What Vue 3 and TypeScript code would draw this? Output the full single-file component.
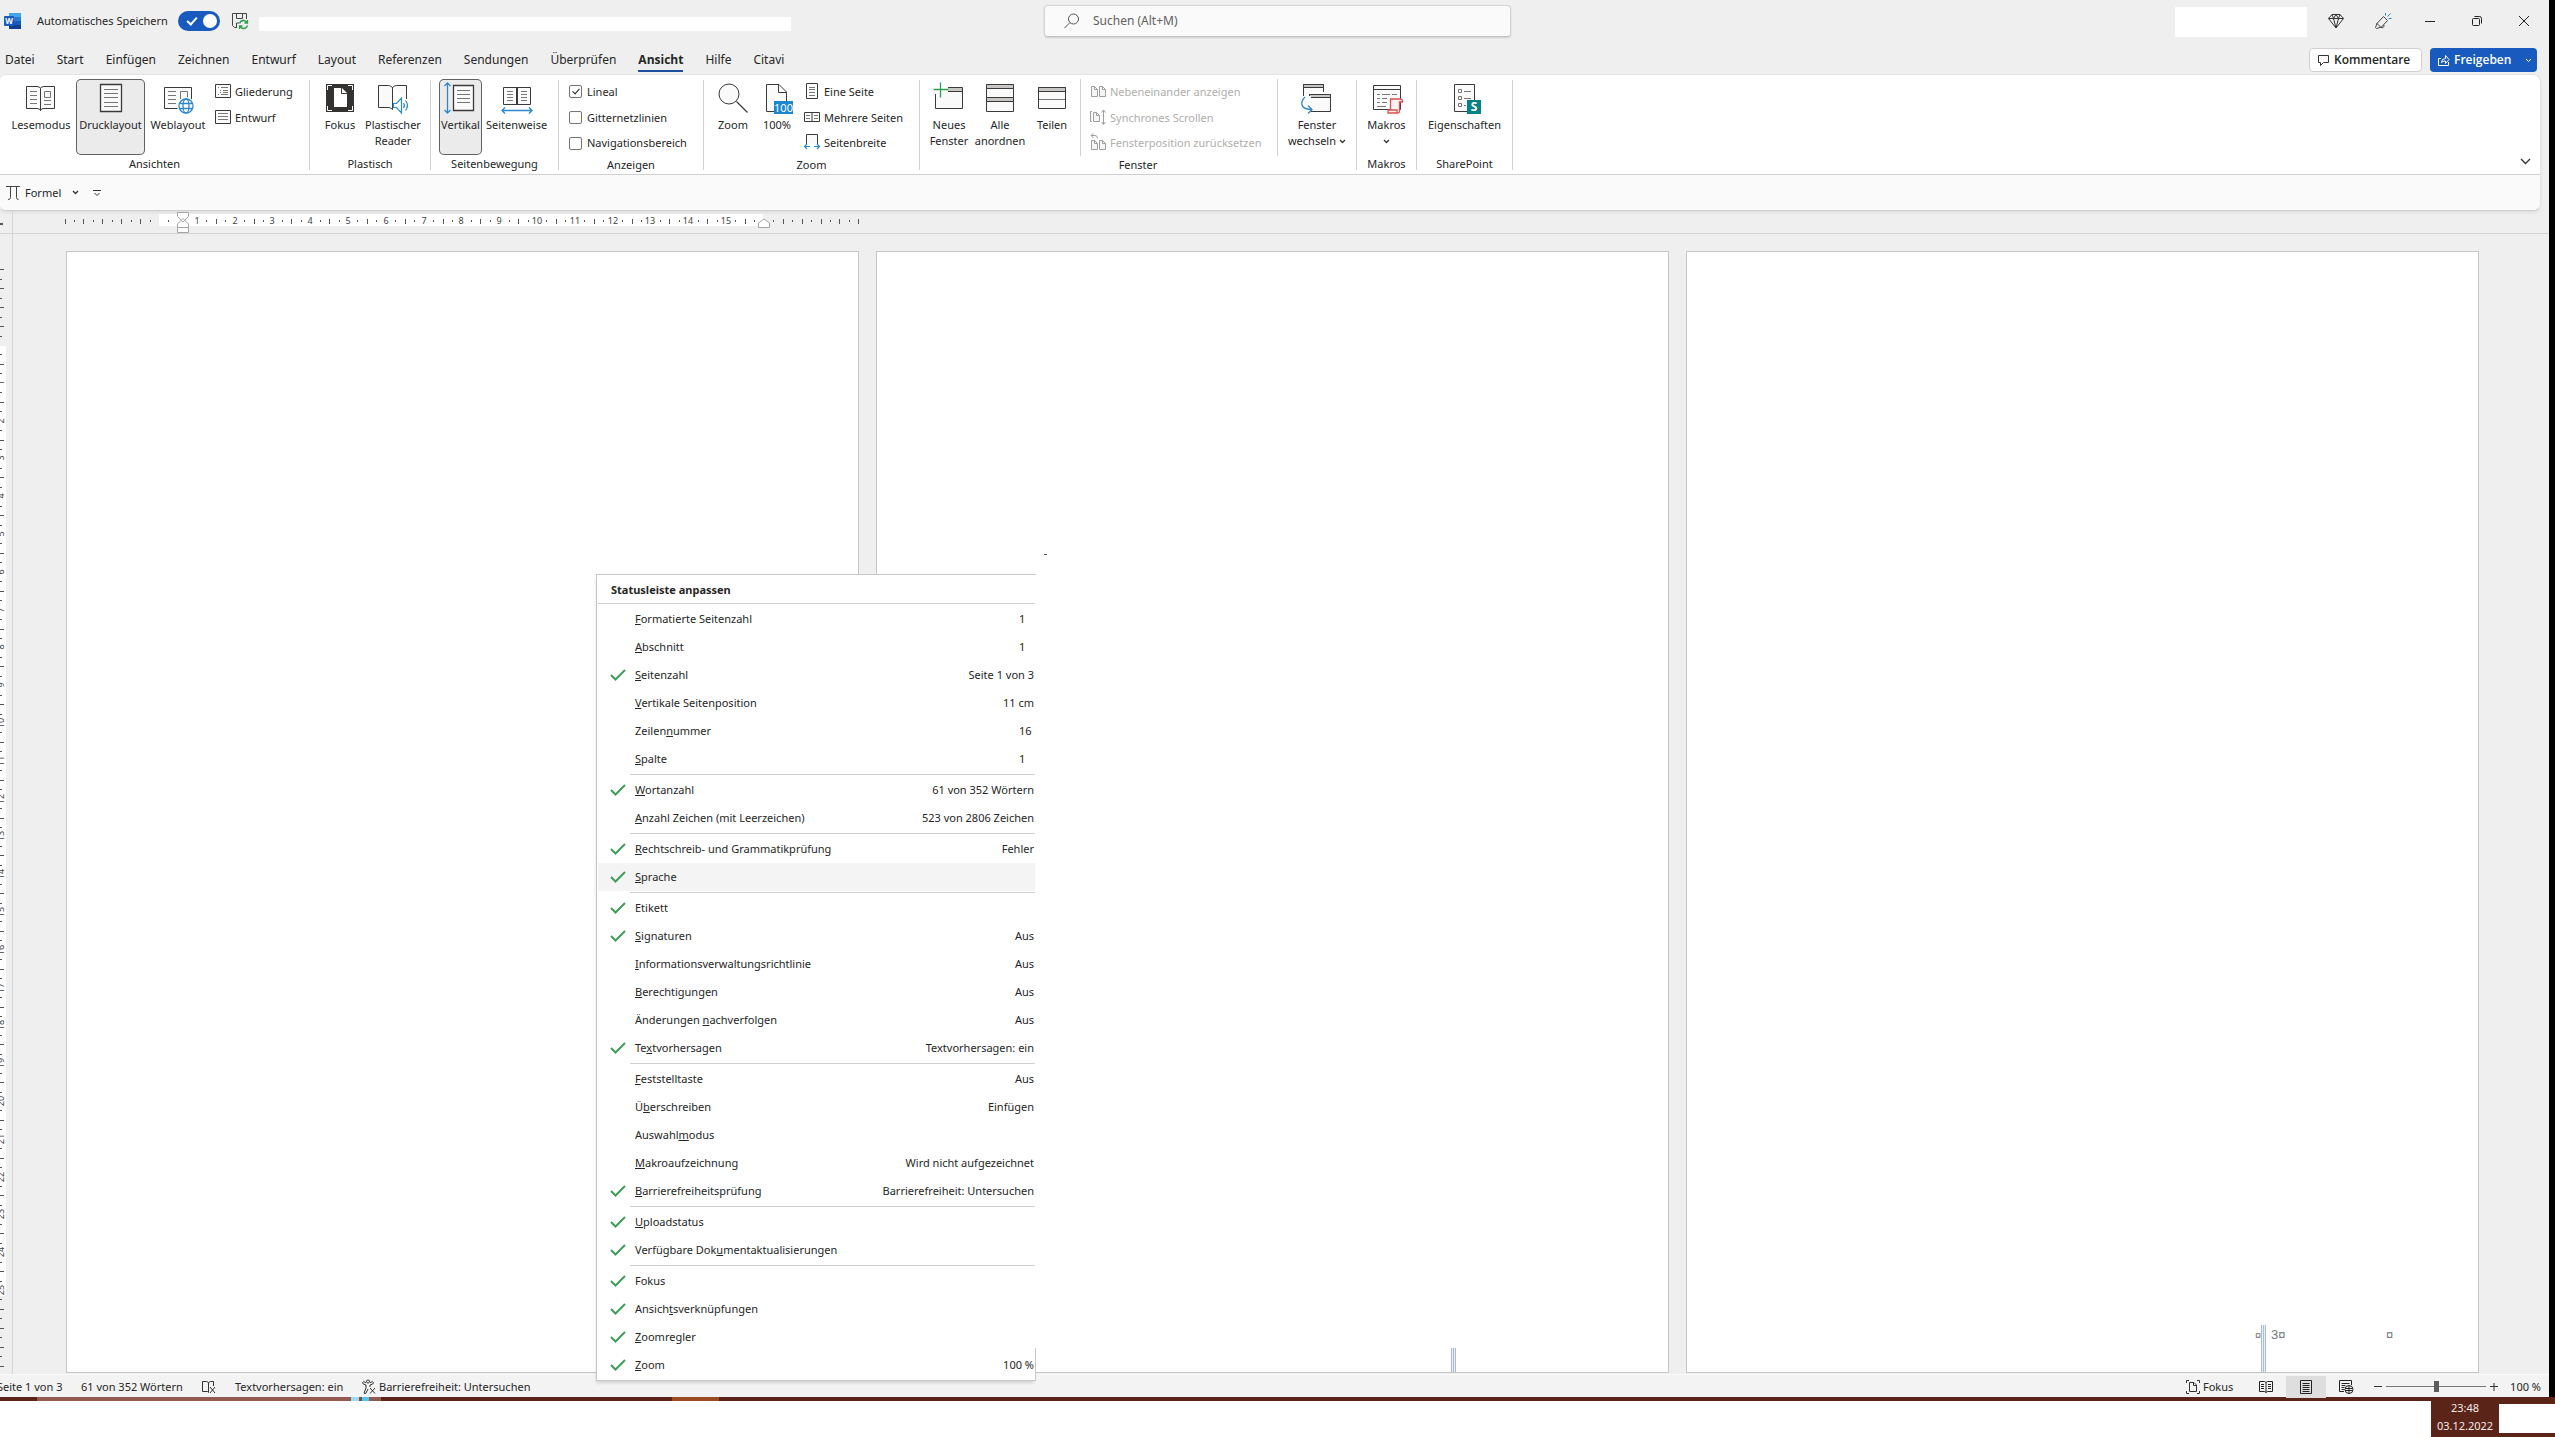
<script setup lang="ts">
import { ref } from 'vue'

interface BigButton { label: string[]; icon: string; width: number; active?: boolean; chevron?: boolean }
interface MenuItem { before: string; key: string; after: string; checked?: boolean; value?: string; field?: boolean; hover?: boolean }
interface Tick { pos: number; kind: 'dot' | 'tick' | 'num'; label: string }

const autoSave = ref(true)
const search = ref('')
const zoom = ref(50)

const tabs = ['Datei', 'Start', 'Einfügen', 'Zeichnen', 'Entwurf', 'Layout', 'Referenzen', 'Sendungen', 'Überprüfen', 'Ansicht', 'Hilfe', 'Citavi']

const D = 'stroke="#3b3a39"'
const G = 'stroke="#797775"'
const B = 'stroke="#2b88d0"'

const icons: Record<string, string> = {
  read: `<path ${D} fill="#fafafa" d="M1.5 4.5H12q3 0 3.500 2 .5-2 3.500-2h10.500v22H19q-3 0-3.500 2-.5-2-3.500-2H1.500zM15.500 6.500v22"/><path ${G} d="M5 9.500h7M5 13.500h7M5 17.500h7M5 21.500h7M19 18.500h7M19 22.500h7M19.500 9.500h6v6h-6z"/>`,
  print: `<path ${D} stroke-width="1.3" fill="#fafafa" d="M5.500 2.500h21v27h-21z"/><path ${G} d="M9 7.500h14M9 11.500h14M9 15.500h14M9 20.500h14M9 24.500h14"/>`,
  web: `<path ${D} fill="#fafafa" d="M2.500 5.500h27v21h-27z"/><path ${G} d="M6 9.500h8M6 13.500h8M6 17.500h8M6 21.500h8M18.500 18v-8.500h7V16"/><circle cx="24" cy="24" r="9" fill="#fff"/><circle ${B} stroke-width="1.3" fill="#fff" cx="24" cy="24" r="7"/><ellipse ${B} stroke-width="1.3" cx="24" cy="24" rx="3" ry="7"/><path ${B} stroke-width="1.3" d="M17.500 21.500h13M17.500 26.500h13"/>`,
  outline: `<path ${D} fill="#fafafa" d="M.5.5h15v13H.5z"/><path ${G} d="M3 3.500h1M6 3.500h7M5 6.500h1M8 6.500h5M5 8.500h1M8 8.500h5M3 10.500h1M6 10.500h7"/>`,
  draft: `<path ${D} fill="#fafafa" d="M.5.5h15v13H.5z"/><path ${G} d="M3 3.500h10M3 6.500h10M3 9.500h10"/>`,
  focus: `<path fill="#333231" d="M2 2h28v28H2z"/><path stroke="#fff" d="M3.500 8V3.500H8M24 3.500h4.500V8M28.500 24v4.500H24M8 28.500H3.500V24"/><path fill="#fff" d="M10 6h8l5 5v14H10z"/><path ${D} d="M17.500 6v5.500H23"/>`,
  reader: `<path ${D} fill="#fafafa" d="M15.500 5.500q-2-2-4-2h-10v22H11q3 0 4.500 2zV20M15.500 5.500q2-2 4-2h10V17"/><path ${B} stroke-width="1.2" fill="#fff" d="M16.500 21.500h3l5-5.500v15l-5-5.500h-3zM26.500 21q2 2.500 0 5M28.500 18.500q4 5 0 10"/>`,
  vertical: `<path ${B} stroke-width="1.3" d="M2.500 1v30M-.5 4l3-3 3 3M-.5 28l3 3 3-3"/><path ${D} stroke-width="1.3" fill="#fafafa" d="M8.500 3.500h20v25h-20z"/><path ${G} d="M12 8.500h13M12 12.500h13M12 16.500h13M12 20.500h13"/>`,
  side: `<path ${D} fill="#fafafa" d="M2.500 5.500h27v17h-27zM15.500 5.500v17M16.500 5.500v17"/><path ${G} d="M6 9.500h6M6 12.500h6M6 15.500h6M6 18.500h6M20 9.500h6M20 12.500h6M20 15.500h6M20 18.500h6"/><path ${B} stroke-width="1.3" d="M1 28.500h30M4 25.500l-3 3 3 3M28 25.500l3 3-3 3"/>`,
  zoom: `<circle ${D} fill="#fafafa" cx="12" cy="12" r="10"/><path ${D} stroke-width="1.2" d="M19.500 19.500l11 11"/>`,
  hundred: `<path ${D} fill="#fafafa" d="M13 29.500H5.500v-27H18l7.500 7.500v9M17.500 2.500v8h8"/><path fill="#1e88cf" d="M13 19h19v13H13z"/><text x="22.500" y="30" font-size="11" fill="#fff" text-anchor="middle">100</text>`,
  one: `<path ${D} fill="#fafafa" d="M2.500-.5h11v15h-11z"/><path ${G} d="M5 3.500h6M5 5.500h6M5 8.500h6M5 11.500h6"/>`,
  many: `<path ${D} fill="#fafafa" d="M.5 2.500h15v9H.5zM8 2.500v9"/><path ${G} d="M2 5.500h4M2 8.500h4M10 5.500h4M10 8.500h4"/>`,
  width: `<path ${D} fill="#fafafa" d="M2.500 9v-9.500h11V9"/><path ${B} stroke-width="1.200" d="M1 11.500h5M10 11.500h5M3 9l-2.500 2.500L3 14M13 9l2.500 2.500L13 14"/>`,
  newwin: `<path ${D} fill="#fafafa" d="M2.500 12v14.500h27v-21H15"/><path fill="#c8c6c4" d="M15 6h14v3.500H15z"/><path ${D} d="M15 9.500h14"/><path stroke="#2f9e4f" stroke-width="1.300" d="M.5 7.500h15M7.500.5v15"/>`,
  arrange: `<path ${D} fill="#fafafa" d="M2.500 2.500h27v27h-27z"/><path fill="#c8c6c4" ${D} d="M2.500 2.500h27v4h-27zM2.500 15.500h27v4h-27z"/>`,
  split: `<path ${D} fill="#fafafa" d="M2.500 5.500h27v21h-27z"/><path fill="#c8c6c4" ${D} d="M2.500 5.500h27v4h-27z"/><path ${G} d="M3 17.500h26"/>`,
  beside: `<path stroke="#a19f9d" fill="#f5f5f5" d="M1.500 2.500h3l3 3v7h-6zM9.500 2.500h3l3 3v7h-6zM4.500 2.500v3h3M12.500 2.500v3h3"/>`,
  sync: `<path stroke="#a19f9d" fill="#f5f5f5" d="M2 1.500H.5v10H2M3.500 2.500h3l3 3v6h-6zM6.500 2.500v3h3"/><path stroke="#a19f9d" d="M13.500 0v14M11.500 2.500l2-2.500 2 2.500M11.500 12l2 2.500 2-2.500"/>`,
  reset: `<path stroke="#a19f9d" fill="#f5f5f5" d="M1.500 5.500h3l3 3v6h-6zM9.500 5.500h3l3 3v6h-6zM4.500 5.500v3h3M12.500 5.500v3h3"/><path stroke="#a19f9d" d="M3.500-1.500L1 .5l2.500 2.500M1 .5h4q2.500 0 2.500 3"/>`,
  switch: `<path ${D} fill="#fafafa" d="M2.500 2.500h20v14h-20z"/><path ${D} fill="#c8c6c4" d="M2.500 2.500h20v3h-20z"/><path fill="#fff" d="M6 10h27v23H6z"/><path ${D} fill="#fafafa" d="M8.500 12.500h21v17h-21z"/><path ${D} fill="#c8c6c4" d="M8.500 12.500h21v3h-21z"/><path fill="#fff" d="M0 14h10v20H0z"/><path ${B} stroke-width="1.300" d="M4 15q-4 4-3 8t9 4.500M7 23.500l4 4-4 4"/>`,
  macro: `<path ${D} fill="#fafafa" d="M2.500 3.500h27v24h-27zM2.500 7.500h27"/><path ${G} d="M6 12.500h3M11 12.500h8M21 12.500h5M6 16.500h3M11 16.500h5M6 20.500h3M11 20.500h5M6 24.500h9"/><path stroke="#e04f4f" stroke-width="1.300" fill="#fdf3f3" d="M19.500 28V17h10q2 0 2 3h-3v9.500q0 1.500-1.500 1.500H17v-3h9v3"/>`,
  props: `<path ${D} fill="#fafafa" d="M5.500 2.500h20v27h-20z"/><path ${G} d="M9.500 7.500h3v3h-3zM9.500 14.500h3v3h-3zM9.500 21.500h3v3h-3zM15 9.500h7M15 16.500h7M15 23.500h2"/><path fill="#038387" d="M18 18h14v14H18z"/><text x="25" y="29" font-size="12" font-weight="700" fill="#fff" text-anchor="middle">S</text>`
}

const views: BigButton[] = [
  { label: ['Lesemodus'], icon: 'read', width: 66 },
  { label: ['Drucklayout'], icon: 'print', width: 69, active: true },
  { label: ['Weblayout'], icon: 'web', width: 62 }
]
const immersive: BigButton[] = [
  { label: ['Fokus'], icon: 'focus', width: 44 },
  { label: ['Plastischer', 'Reader'], icon: 'reader', width: 58 }
]
const movement: BigButton[] = [
  { label: ['Vertikal'], icon: 'vertical', width: 43, active: true },
  { label: ['Seitenweise'], icon: 'side', width: 65 }
]
const zooms: BigButton[] = [
  { label: ['Zoom'], icon: 'zoom', width: 42 },
  { label: ['100%'], icon: 'hundred', width: 42 }
]
const windows: BigButton[] = [
  { label: ['Neues', 'Fenster'], icon: 'newwin', width: 42 },
  { label: ['Alle', 'anordnen'], icon: 'arrange', width: 56 },
  { label: ['Teilen'], icon: 'split', width: 44 }
]

interface Group { name: string; cls: string; big: BigButton[]; small?: [string, string][]; disabled?: [string, string][]; last?: BigButton; checks?: boolean }
const groups: Group[] = [
  { name: 'Ansichten', cls: 'g-views', big: views, small: [['outline', 'Gliederung'], ['draft', 'Entwurf']] },
  { name: 'Plastisch', cls: 'g-immersive', big: immersive },
  { name: 'Seitenbewegung', cls: 'g-move', big: movement },
  { name: 'Anzeigen', cls: 'g-show', big: [], checks: true },
  { name: 'Zoom', cls: 'g-zoom', big: zooms, small: [['one', 'Eine Seite'], ['many', 'Mehrere Seiten'], ['width', 'Seitenbreite']] },
  {
    name: 'Fenster', cls: 'g-window', big: windows,
    disabled: [['beside', 'Nebeneinander anzeigen'], ['sync', 'Synchrones Scrollen'], ['reset', 'Fensterposition zurücksetzen']],
    last: { label: ['Fenster', 'wechseln'], icon: 'switch', width: 66, chevron: true }
  },
  { name: 'Makros', cls: 'g-macro', big: [{ label: ['Makros', ''], icon: 'macro', width: 50, chevron: true }] },
  { name: 'SharePoint', cls: 'g-share', big: [{ label: ['Eigenschaften'], icon: 'props', width: 84 }] }
]

const checks = ref([
  { label: 'Lineal', on: true },
  { label: 'Gitternetzlinien', on: false },
  { label: 'Navigationsbereich', on: false }
])

const m = (text: string, checked = false, value = '', extra: Partial<MenuItem> = {}): MenuItem => {
  const i = text.indexOf('_')
  return i < 0
    ? { before: text, key: '', after: '', checked, value, ...extra }
    : { before: text.slice(0, i), key: text[i + 1], after: text.slice(i + 2), checked, value, ...extra }
}
const menu: MenuItem[][] = [
  [
    m('_Formatierte Seitenzahl', false, '1', { field: true }),
    m('_Abschnitt', false, '1', { field: true }),
    m('_Seitenzahl', true, 'Seite 1 von 3'),
    m('_Vertikale Seitenposition', false, '11 cm'),
    m('Zeilen_nummer', false, '16', { field: true }),
    m('_Spalte', false, '1', { field: true })
  ],
  [m('_Wortanzahl', true, '61 von 352 Wörtern'), m('_Anzahl Zeichen (mit Leerzeichen)', false, '523 von 2806 Zeichen')],
  [m('_Rechtschreib- und Grammatikprüfung', true, 'Fehler'), m('_Sprache', true, '', { hover: true })],
  [
    m('Etikett', true),
    m('_Signaturen', true, 'Aus'),
    m('_Informationsverwaltungsrichtlinie', false, 'Aus'),
    m('_Berechtigungen', false, 'Aus'),
    m('Änderungen _nachverfolgen', false, 'Aus'),
    m('Te_xtvorhersagen', true, 'Textvorhersagen: ein')
  ],
  [
    m('_Feststelltaste', false, 'Aus'),
    m('Ü_berschreiben', false, 'Einfügen'),
    m('Auswahl_modus'),
    m('_Makroaufzeichnung', false, 'Wird nicht aufgezeichnet'),
    m('_Barrierefreiheitsprüfung', true, 'Barrierefreiheit: Untersuchen')
  ],
  [m('_Uploadstatus', true), m('Verfügbare Dok_umentaktualisierungen', true)],
  [m('Fokus', true), m('Ansich_tsverknüpfungen', true), m('_Zoomregler', true), m('_Zoom', true, '100 %')]
]

// Four steps per centimetre; numbers appear only inside the text area.
const STEP = 37.8 / 4
function scale(from: number, to: number, limit: number, origin: number): Tick[] {
  const out: Tick[] = []
  for (let k = from; k <= to; k++) {
    if (k === 0) continue
    const inside = k > 0 && k < limit
    const kind = k % 2 !== 0 ? 'dot' : inside && k % 4 === 0 ? 'num' : 'tick'
    out.push({ pos: Math.round(origin + k * STEP), kind, label: String(k / 4) })
  }
  return out
}
const hTicks = scale(-10, 74, 64, 159).filter(t => Math.abs(t.pos - 183) > 6 && Math.abs(t.pos - 764) > 4)
const vTicks = scale(-8, 108, 101, 111)
</script>

<template>
  <div class="desktop">
    <div class="window">
      <header class="title-bar">
        <svg class="word" width="18" height="18" viewBox="0 0 18 18">
          <path fill="#41a5ee" d="M5 1h12v4H5z" /><path fill="#2b7cd3" d="M5 5h12v4H5z" /><path fill="#185abd" d="M5 9h12v4H5z" /><path fill="#103f91" d="M5 13h12v4H5z" />
          <rect y="4" width="10" height="10" rx="1" fill="#185abd" />
          <text x="5" y="12" font-size="8" font-weight="700" fill="#fff" text-anchor="middle">W</text>
        </svg>
        <label class="autosave">
          <span>Automatisches Speichern</span>
          <input v-model="autoSave" type="checkbox" role="switch" class="switch" />
        </label>
        <button class="plain save" aria-label="Speichern">
          <svg width="18" height="18" viewBox="0 0 18 18" fill="none" stroke="#444">
            <path d="M6 15.500H3.500l-2-2v-12h14V7M5.500 1.500v5h6v-5M5.500 15v-4H8" />
            <path stroke="#2f9e4f" stroke-width="1.300" d="M8.500 11.500q1-3 4-3 2.500 0 3.500 2.500M16.500 8v3h-3M16.500 13.500q-1 3-4 3-2.500 0-3.500-2.500M8.500 17v-3h3" />
          </svg>
        </button>
        <div class="doc-name"></div>
        <div class="search">
          <svg width="16" height="16" viewBox="0 0 16 16" fill="none" stroke="#555"><circle cx="9.500" cy="6" r="5" /><path d="M6 9.500L.5 15" /></svg>
          <input v-model="search" type="text" placeholder="Suchen (Alt+M)" aria-label="Suchen" />
        </div>
        <div class="account"></div>
        <div class="win-buttons">
          <button class="plain" aria-label="Premium">
            <svg width="16" height="16" viewBox="0 0 16 16" fill="none" stroke="#333"><path d="M4 1.500h8l3.500 4L8 15 .5 5.500zM.5 5.500h15M4 1.500l1.500 4L8 15l2.500-9.500 1.500-4M5.500 5.500L8 1.500l2.500 4" /></svg>
          </button>
          <button class="plain" aria-label="Neuigkeiten">
            <svg width="18" height="18" viewBox="0 0 18 18" fill="none" stroke="#444"><path d="M9.500 4.500l4 4-6 6.500-5 1.500-1-1 1.500-4zM2.500 11l4.500 4.500M7 15.500q3 1 3-2.500" /><path stroke="#2b88d0" d="M11.500 3.500v-2.500M13.500 4.500l3-3M14.500 6.500h3" /></svg>
          </button>
          <button class="plain" aria-label="Minimieren"><svg width="12" height="12" viewBox="0 0 12 12" stroke="#222"><path d="M1 6.500h10" /></svg></button>
          <button class="plain" aria-label="Wiederherstellen"><svg width="12" height="12" viewBox="0 0 12 12" fill="none" stroke="#222"><rect x="1.500" y="3.500" width="7" height="7" rx="1" /><path d="M3.500 1.500h5q2 0 2 2v5" /></svg></button>
          <button class="plain" aria-label="Schließen"><svg width="12" height="12" viewBox="0 0 12 12" stroke="#222"><path d="M1 1l10 10M11 1L1 11" /></svg></button>
        </div>
      </header>

      <nav class="tabs">
        <button v-for="t in tabs" :key="t" class="plain tab" :class="{ current: t === 'Ansicht' }">{{ t }}</button>
        <div class="spacer"></div>
        <button class="comments">
          <svg width="13" height="13" viewBox="0 0 13 13" fill="none" stroke="#333"><path d="M1.500 1.500h10v7h-5l-3 3v-3h-2z" /></svg>
          Kommentare
        </button>
        <button class="share">
          <svg width="13" height="13" viewBox="0 0 13 13" fill="none" stroke="#fff"><path d="M4 4.500H1.500v7h10V8M4.500 8.500q0-4 4-4v-3l3.500 4-3.500 4v-2.500q-2.500 0-4 1.500z" /></svg>
          Freigeben
          <svg class="share-chevron" width="7" height="5" viewBox="0 0 7 5" fill="none" stroke="#fff"><path d="M1 1l2.500 2.500L6 1" /></svg>
        </button>
      </nav>

      <section class="ribbon">
        <div class="groups">
          <div v-for="g in groups" :key="g.name" class="group" :class="g.cls">
            <div class="controls">
              <button v-for="b in g.big" :key="b.icon" class="plain big" :class="{ active: b.active }" :style="{ width: b.width + 'px' }">
                <svg width="32" height="32" viewBox="0 0 32 32" fill="none" v-html="icons[b.icon]"></svg>
                <span v-for="(l, i) in b.label" :key="i" class="line">{{ l }}<svg v-if="b.chevron && i === 1" width="7" height="5" viewBox="0 0 7 5" fill="none" stroke="#333" stroke-width="1.300"><path d="M1 1l2.500 2.500L6 1" /></svg></span>
              </button>
              <div v-if="g.small" class="column">
                <button v-for="s in g.small" :key="s[0]" class="plain small">
                  <svg width="16" height="16" viewBox="0 0 16 16" fill="none" v-html="icons[s[0]]"></svg>{{ s[1] }}
                </button>
              </div>
              <div v-if="g.checks" class="column">
                <label v-for="c in checks" :key="c.label" class="small check"><input v-model="c.on" type="checkbox" />{{ c.label }}</label>
              </div>
              <div v-if="g.disabled" class="column inactive">
                <button v-for="s in g.disabled" :key="s[0]" class="plain small" disabled>
                  <svg width="16" height="16" viewBox="0 0 16 16" fill="none" v-html="icons[s[0]]"></svg>{{ s[1] }}
                </button>
              </div>
              <button v-if="g.last" class="plain big" :style="{ width: g.last.width + 'px' }">
                <svg width="32" height="32" viewBox="0 0 32 32" fill="none" v-html="icons[g.last.icon]"></svg>
                <span class="line">{{ g.last.label[0] }}</span>
                <span class="line">{{ g.last.label[1] }} <svg width="7" height="5" viewBox="0 0 7 5" fill="none" stroke="#333" stroke-width="1.300"><path d="M1 1l2.500 2.500L6 1" /></svg></span>
              </button>
            </div>
            <div class="group-name">{{ g.name }}</div>
          </div>
          <div class="spacer"></div>
          <button class="plain collapse" aria-label="Menüband reduzieren"><svg width="11" height="7" viewBox="0 0 11 7" fill="none" stroke="#333" stroke-width="1.300"><path d="M1 1l4.500 4.500L10 1" /></svg></button>
        </div>
        <div class="quick">
          <button class="plain formula">
            <svg width="14" height="14" viewBox="0 0 14 14" fill="none" stroke="#444"><path d="M0 .5h14M4.500.5v11q0 2-2.500 2M10.500.5v11q0 2 2 2" /></svg>
            Formel
            <svg class="formula-chevron" width="7" height="5" viewBox="0 0 7 5" fill="none" stroke="#333" stroke-width="1.300"><path d="M1 1l2.500 2.500L6 1" /></svg>
          </button>
          <button class="plain" aria-label="Symbolleiste anpassen"><svg width="8" height="8" viewBox="0 0 8 8" fill="none" stroke="#333"><path d="M0 1.500h8M1.500 4L4 6.500 6.500 4" /></svg></button>
        </div>
      </section>

      <div class="h-ruler">
        <svg width="100%" height="22">
          <path stroke="#555" stroke-width="2" d="M0 13h3" />
          <path stroke="#d4d4d4" d="M12.500 0v22" />
          <rect x="159" y="3" width="604" height="12" fill="#fff" />
          <template v-for="t in hTicks" :key="t.pos">
            <text v-if="t.kind === 'num'" :x="t.pos" y="13" text-anchor="middle" class="ruler-num">{{ t.label }}</text>
            <rect v-else :x="t.pos" :y="t.kind === 'tick' ? 8 : 9" width="1" :height="t.kind === 'tick' ? 5 : 2" fill="#555" />
          </template>
          <path fill="#fff" stroke="#a5a5a5" d="M177.500 1.500h11v4L183 11l-5.500-5.500zM183 7.500l5.500 5.500v3.500h-11V13zM177.500 16.500h11v5h-11zM758.500 16.500V12l5.500-4 5.500 4v4.500z" />
        </svg>
      </div>

      <main class="document">
        <div class="v-ruler">
          <svg width="12" height="100%">
            <rect x="0" y="112" width="6" height="950" fill="#fff" />
            <template v-for="t in vTicks" :key="t.pos">
              <text v-if="t.kind === 'num'" x="0" y="0" :transform="`translate(4 ${t.pos}) rotate(-90)`" text-anchor="middle" class="ruler-num">{{ t.label }}</text>
              <rect v-else x="0" :y="t.pos" :width="t.kind === 'tick' ? 4 : 2" height="1" fill="#555" />
            </template>
          </svg>
        </div>
        <div class="pages">
          <article class="page"></article>
          <article class="page">
            <i class="speck"></i>
            <i class="cursor-bar early"></i>
          </article>
          <article class="page">
            <span class="mark first">¤</span>
            <i class="cursor-bar"></i>
            <span class="mark number">3¤</span>
            <span class="mark end">¤</span>
          </article>
        </div>
      </main>

      <footer class="status">
        <span class="page-count">Seite 1 von 3</span>
        <span class="words">61 von 352 Wörtern</span>
        <svg class="proof" width="16" height="14" viewBox="0 0 16 14" fill="none" stroke="#333"><path d="M7.500 12.500l-1-1h-5V1.500h4l2 1 2-1h3V6M7.500 2.500v10M9 7l5 6M14 7l-5 6" /></svg>
        <span class="predict">Textvorhersagen: ein</span>
        <svg class="access" width="16" height="16" viewBox="0 0 16 16" fill="none" stroke="#333"><circle cx="7" cy="2.500" r="1.500" /><path d="M5 3.500q-3-1.500-3.500 0T5 6v3l-2 5q1 1.500 2 0l2-4M9 3.500q3-1.500 3.500 0T9 6v2M9 9l5 5.500M14 9l-5 5.500" /></svg>
        <span>Barrierefreiheit: Untersuchen</span>
        <div class="spacer"></div>
        <button class="plain focus-btn">
          <svg width="14" height="14" viewBox="0 0 14 14" fill="none" stroke="#333"><path d="M3 .5H.5V3M11 .5h2.500V3M13.500 11v2.500H11M3 13.500H.5V11M3.500 2.500H8l2.500 2.500v6.500h-7zM7.500 2.500v3h3" /></svg>
          Fokus
        </button>
        <button class="plain view" aria-label="Lesemodus"><svg width="14" height="14" viewBox="0 0 14 14" fill="none" stroke="#222"><path d="M.5 1.500h5L7 2.500l1.500-1h5v10h-5L7 12.500l-1.500-1h-5zM7 2.500v10M2 4.500h3M2 6.500h3M2 8.500h3M9 4.500h3M9 6.500h3M9 8.500h3" /></svg></button>
        <button class="plain view on" aria-label="Drucklayout"><svg width="12" height="14" viewBox="0 0 12 14" fill="none" stroke="#222"><path d="M.5.5h11v13H.5zM2.500 3.500h7M2.500 5.500h7M2.500 7.500h7M2.500 9.500h7M2.500 11.500h7" /></svg></button>
        <button class="plain view" aria-label="Weblayout"><svg width="15" height="14" viewBox="0 0 15 14" fill="none" stroke="#222"><path d="M5 11.500H.5V.5h12V5M2.500 3.500h8M2.500 5.500h4M2.500 7.500h3M2.500 9.500h3" /><circle cx="10" cy="9.500" r="4" /><path d="M6 8.500h8M6 10.500h8M10 5.500v8" /></svg></button>
        <button class="plain step" aria-label="Verkleinern"><svg width="8" height="8" viewBox="0 0 8 8" stroke="#333"><path d="M0 3.500h8" /></svg></button>
        <input v-model="zoom" class="zoom" type="range" min="0" max="100" aria-label="Zoom" />
        <button class="plain step" aria-label="Vergrößern"><svg width="8" height="8" viewBox="0 0 8 8" stroke="#333"><path d="M0 3.500h8M4 0v8" /></svg></button>
        <span class="percent">100 %</span>
      </footer>

      <div class="menu" role="menu">
        <h2>Statusleiste anpassen</h2>
        <div v-for="(part, p) in menu" :key="p" class="part">
          <button v-for="item in part" :key="item.before + item.key + item.after" class="plain item" :class="{ hover: item.hover }" role="menuitemcheckbox" :aria-checked="item.checked">
            <span class="tickbox"><svg v-if="item.checked" width="16" height="12" viewBox="0 0 16 12" fill="none" stroke="#3f9e5a" stroke-width="2"><path d="M1 6l4.500 4.500L15 1" /></svg></span>
            <span class="name">{{ item.before }}<u>{{ item.key }}</u>{{ item.after }}</span>
            <span class="value" :class="{ field: item.field }">{{ item.value }}</span>
          </button>
        </div>
      </div>
    </div>

    <div class="taskbar">
      <div class="strip"><i class="running"><b></b></i><i class="orange"></i></div>
      <div class="clock"><span>23:48</span><span>03.12.2022</span></div>
      <div class="tray"></div>
    </div>
  </div>
</template>

<style>
body { margin: 0; }
</style>

<style scoped>
* { box-sizing: border-box; }
.desktop {
  display: flex; flex-direction: column; height: 100vh; overflow: hidden; background: #fff;
  font: 11px/16px "Noto Sans", "Open Sans", sans-serif; color: #262626;
}
.window { flex: 1; min-height: 0; display: flex; flex-direction: column; position: relative; background: #efefef; border-right: 6px solid #000; }
button, input { font: inherit; color: inherit; }
.plain { border: 0; background: none; padding: 0; margin: 0; display: flex; align-items: center; white-space: nowrap; }
svg { display: block; flex: none; overflow: visible; }
.spacer { flex: 1; }

.title-bar { height: 42px; display: flex; align-items: center; padding-left: 4px; position: relative; }
.autosave { display: flex; align-items: center; margin-left: 15px; width: 183px; justify-content: space-between; white-space: nowrap; }
.switch { appearance: none; width: 42px; height: 20px; margin: 0; border-radius: 10px; background: #185abd; position: relative; flex: none; }
.switch::after { content: ""; position: absolute; right: 3px; top: 3px; width: 14px; height: 14px; border-radius: 50%; background: #fff; }
.switch::before { content: ""; position: absolute; left: 11px; top: 4px; width: 4px; height: 8px; border: solid #fff; border-width: 0 2px 2px 0; transform: rotate(42deg); }
.save { margin-left: 11px; }
.doc-name { width: 532px; height: 14px; background: #fff; margin: 6px 0 0 10px; }
.search {
  width: 467px; height: 32px; margin-left: 253px; display: flex; align-items: center; gap: 13px; padding: 0 19px;
  background: #fafafa; border: 1px solid #d4d4d4; border-bottom-color: #c4c4c4; border-radius: 4px; box-shadow: 0 1px 2px #0002; font-size: 12px;
}
.search input { flex: 1; min-width: 0; border: 0; outline: 0; background: none; padding: 0; }
.search input::placeholder { color: #616161; opacity: 1; }
.account { width: 132px; height: 30px; background: #fff; margin: 2px 0 0 auto; }
.win-buttons { display: flex; align-items: center; padding-left: 5px; margin-right: 2px; }
.win-buttons button { width: 47px; height: 32px; justify-content: center; }

.tabs { height: 32px; display: flex; align-items: flex-start; padding: 6px 12px 0 5px; gap: 22px; font-size: 12px; }
.tab { height: 24px; padding-top: 2px; border-bottom: 2px solid transparent; }
.tab.current { font-family: "Open Sans", "Noto Sans", sans-serif; font-weight: 700; border-bottom-color: #1f4e9e; }
.comments, .share { height: 24px; display: flex; align-items: center; gap: 4px; border-radius: 4px; white-space: nowrap; padding: 0 7px; font-family: "Open Sans", "Noto Sans", sans-serif; font-weight: 600; }
.comments { width: 113px; background: #fff; border: 1px solid #d0d0d0; }
.share { width: 107px; background: #185abd; border: 0; color: #fff; margin-left: -14px; }
.share-chevron { margin-left: auto; margin-right: -2px; }

.ribbon { margin-right: 8px; border: 1px solid #e3e3e3; border-width: 1px 1px 1px 0; border-bottom-color: #cfcfcf; border-radius: 6px 8px 8px 6px; background: #fff; box-shadow: 0 2px 3px #0001; overflow: hidden; flex: none; }
.groups { display: flex; height: 100px; padding: 5px 0; border-bottom: 1px solid #cfcfcf; }
.group { display: flex; flex-direction: column; height: 90px; position: relative; border-right: 1px solid #d1d1d1; flex: none; }
.controls { display: flex; gap: 2px; height: 77px; padding-left: 8px; margin-top: -1px; }
.group-name { text-align: center; margin-top: 1px; height: 16px; }
.g-views { width: 310px; } .g-immersive { width: 121px; } .g-move { width: 128px; } .g-show { width: 145px; }
.g-zoom { width: 216px; } .g-window { width: 437px; } .g-macro { width: 60px; } .g-share { width: 96px; }
.g-macro .controls, .g-share .controls { padding: 0; justify-content: center; }
.big { flex-direction: column; height: 76px; padding-top: 3px; border-radius: 5px; flex: none; }
.big > svg { margin-bottom: 3px; }
.big.active { background: #ebebeb; box-shadow: inset 0 0 0 1px #616161; }
.line { height: 16px; display: flex; align-items: center; justify-content: center; gap: 3px; }
.column { display: flex; flex-direction: column; margin-left: 4px; }
.g-show .column { margin-left: 2px; }
.small { height: 26px; display: flex; align-items: center; gap: 4px; white-space: nowrap; }
.check { gap: 5px; }
.check input { appearance: none; width: 13px; height: 13px; margin: 0; border: 1px solid #767676; border-radius: 2px; background: #fff; position: relative; }
.check input:checked::after { content: ""; position: absolute; left: 4px; top: 1px; width: 3px; height: 6px; border: solid #222; border-width: 0 1px 1px 0; transform: rotate(42deg); }
.inactive { border: solid #d1d1d1; border-width: 0 1px; padding: 0 0 0 9px; width: 198px; margin-right: 4px; }
.inactive .small { color: #b0aeac; }
.collapse { align-self: flex-end; margin: 0 9px 4px 0; }
.quick { height: 35px; background: #fafafa; display: flex; align-items: center; padding-left: 6px; gap: 14px; }
.formula { gap: 5px; }
.formula-chevron { margin-left: 6px; }

.h-ruler { height: 23px; border-bottom: 1px solid #d4d4d4; flex: none; overflow: hidden; }
.ruler-num { font-size: 9px; fill: #444; }
.document { flex: 1; min-height: 0; display: flex; overflow: hidden; border-bottom: 1px solid #fafafa; }
.v-ruler { width: 13px; border-right: 1px solid #d4d4d4; flex: none; overflow: hidden; }
.pages { flex: 1; display: flex; gap: 17px; padding: 17px 0 1px 53px; }
.page { width: 793px; flex: none; background: #fff; border: 1px solid #c6c6c6; position: relative; }
.cursor-bar { position: absolute; left: 574px; bottom: 0; width: 5px; height: 47px; background: repeating-linear-gradient(90deg, #a9bdd3 0 1px, #e8eef5 1px 2px); }
.cursor-bar.early { height: 24px; }
.speck { position: absolute; left: 167px; top: 302px; width: 3px; height: 1px; background: #555; }
.mark { position: absolute; bottom: 27px; color: #777; font: 13px/20px "Liberation Sans", sans-serif; }
.mark.first { left: 568px; font-size: 11px; }
.mark.number { left: 584px; }
.mark.end { left: 699px; }

.status { height: 22px; flex: none; display: flex; align-items: center; background: #f3f3f3; white-space: nowrap; padding: 1px 8px 0 0; }
.page-count { width: 84px; margin-left: -3px; }
.words { width: 120px; }
.proof { margin-right: 18px; }
.predict { width: 126px; }
.access { margin-right: 2px; }
.focus-btn { gap: 3px; width: 48px; margin-right: 12px; }
.view { width: 40px; height: 22px; justify-content: center; }
.view.on { background: #dedede; }
.step { width: 14px; height: 22px; justify-content: center; }
.view + .step { margin-left: 5px; }
.zoom { appearance: none; width: 100px; height: 12px; margin: 0 1px; background: linear-gradient(#777, #777) center / 100% 1px no-repeat; }
.zoom::-webkit-slider-thumb { appearance: none; width: 5px; height: 11px; background: #5c5c5c; }
.percent { margin-left: 4px; text-align: right; width: 36px; }

.menu {
  position: absolute; left: 596px; top: 574px; width: 440px; background: #fff; border: solid #c8c8c8; border-width: 1px 0 1px 1px;
  padding: 0 0 1px 1px; box-shadow: -1px 3px 3px -1px #0002;
}
.menu::after { content: ""; position: absolute; right: 0; bottom: 0; width: 1px; height: 32px; background: #c8c8c8; }
h2 { margin: 0 1px 1px 0; height: 29px; padding: 7px 0 0 13px; font-size: 11px; line-height: 16px; font-weight: 700; border-bottom: 1px solid #d0d0d0; }
.part + .part { padding-top: 3px; background: linear-gradient(#d0d0d0, #d0d0d0) 32px 1px / 405px 1px no-repeat; }
.item { width: 437px; height: 28px; padding: 0 1px 0 12px; text-align: left; }
.item.hover { background: #f4f4f4; }
.tickbox { width: 25px; }
.name { flex: 1; }
.value.field { width: 15px; }

.taskbar { height: 40px; flex: none; display: flex; background: linear-gradient(#5a2419 4px, #fff 4px); }
.strip { flex: 1; height: 4px; display: flex; }
.running { width: 344px; height: 4px; margin-left: 37px; background: #935b4f; }
.running b { display: block; width: 18px; height: 4px; margin-left: 314px; background: linear-gradient(90deg, #9edcf5 8px, #7d4d44 8px 11px, #4cc9f0 11px); }
.orange { width: 47px; height: 4px; margin-left: 291px; background: #9c4a20; }
.clock { width: 68px; background: #5a2419; color: #f2eae8; display: flex; flex-direction: column; align-items: center; padding-top: 2px; line-height: 18px; }
.tray { width: 56px; background: linear-gradient(#5a2419 7px, #fff 7px 36px, #5a2419 36px); }
</style>
